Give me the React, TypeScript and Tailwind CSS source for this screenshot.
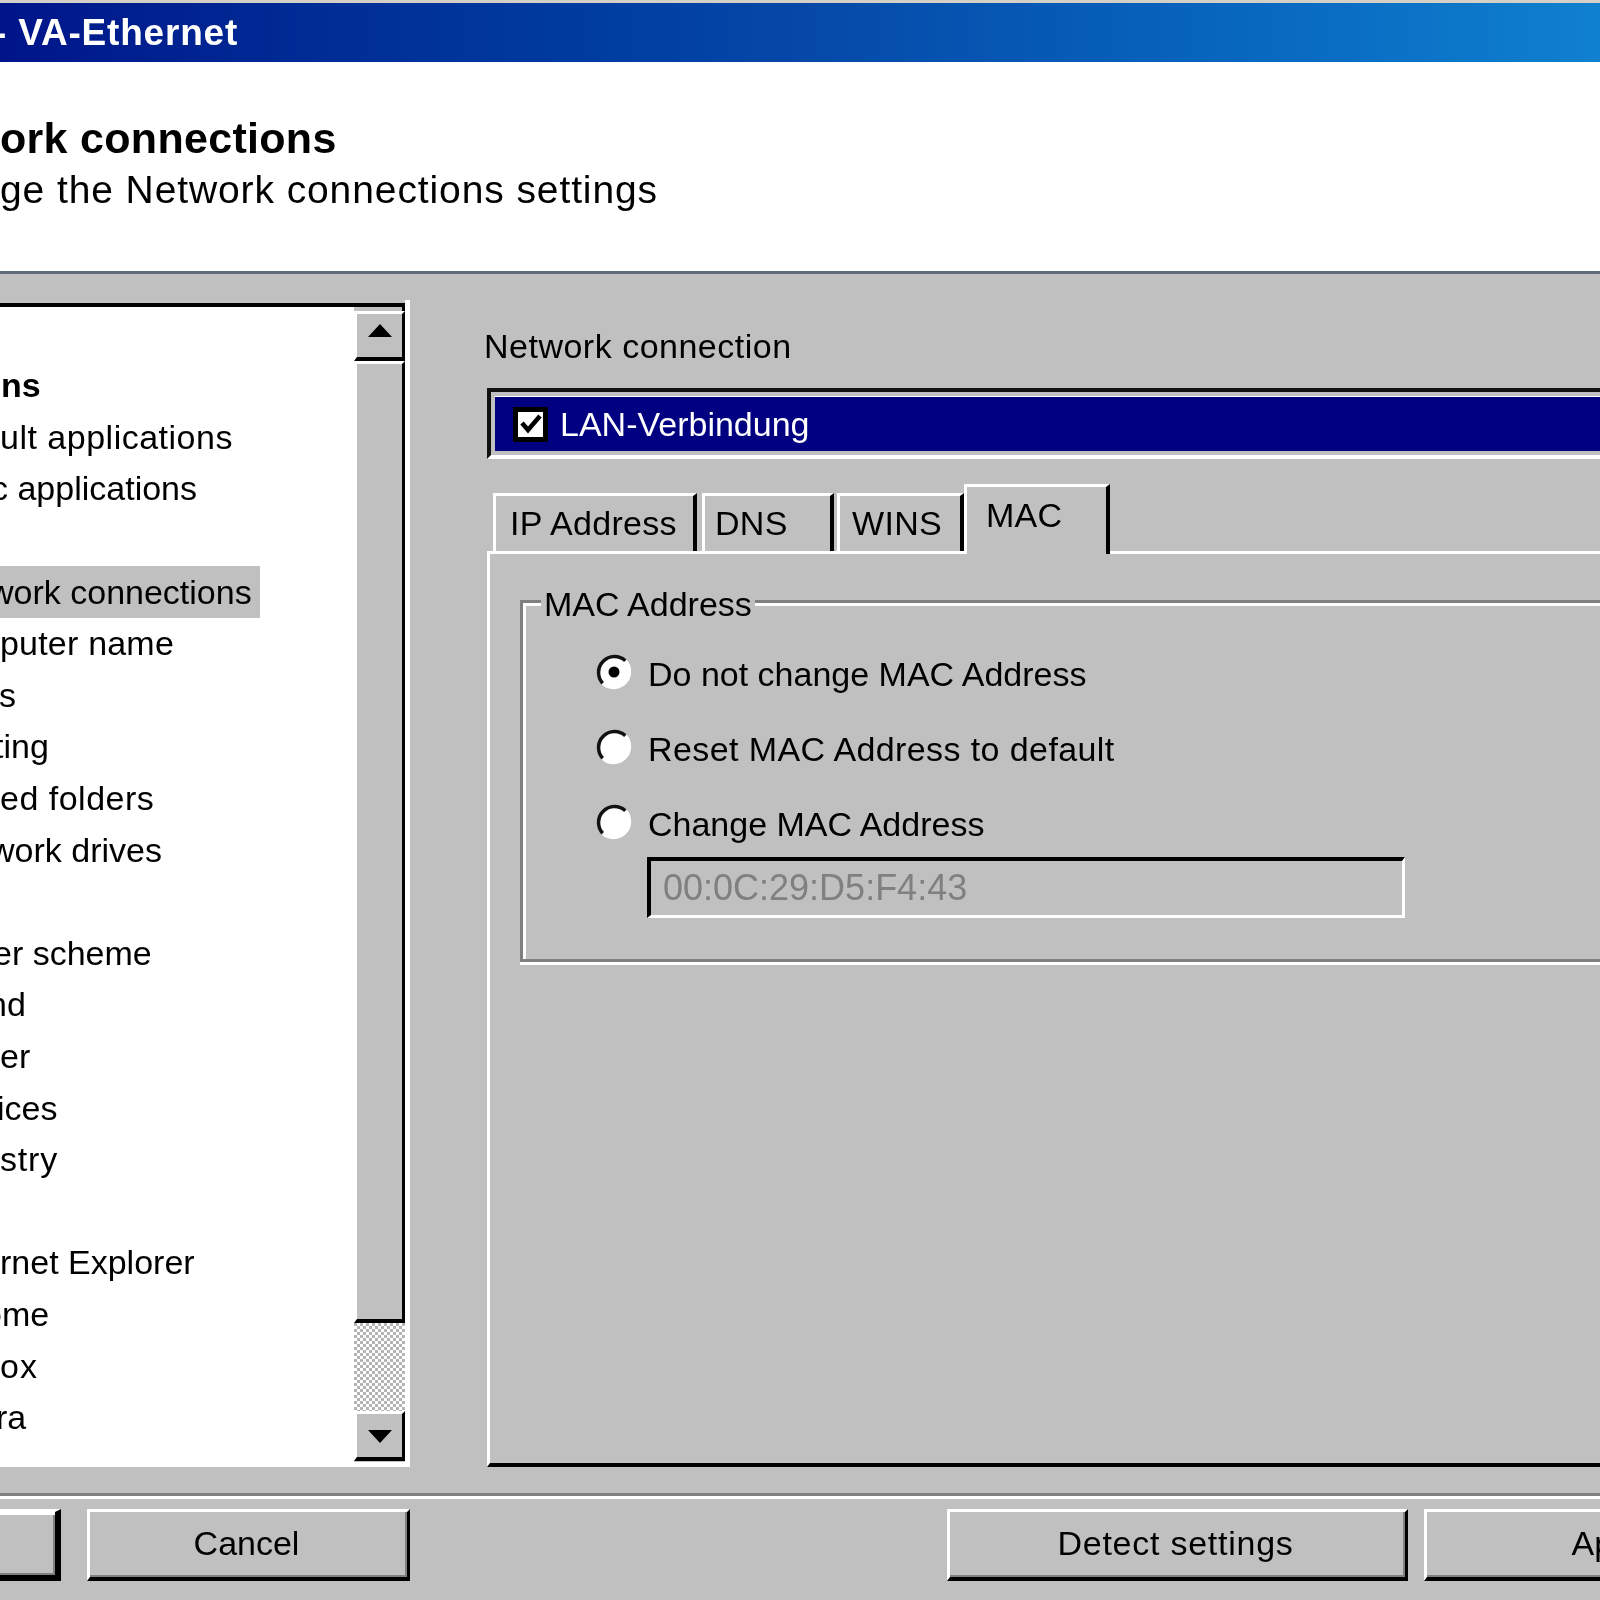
const font = 'font-["Liberation_Sans",Arial,sans-serif]';

// the window is cropped on the left, so these are only the parts that show
const listItems = [
  { label: 'ns', offset: 'ml-[1px]', bold: true },
  { label: 'ult applications', offset: 'tracking-[0.5px]' },
  { label: 'c applications', offset: '-ml-[9px]' },
  { label: '', offset: '' },
  { label: 'work connections', offset: '-ml-[11px]', selected: true },
  { label: 'puter name', offset: 'tracking-[0.2px]' },
  { label: 's', offset: '-ml-[1px]' },
  { label: 'ting', offset: '-ml-[6px]' },
  { label: 'ed folders', offset: 'tracking-[0.5px]' },
  { label: 'work drives', offset: '-ml-[10px]' },
  { label: '', offset: '' },
  { label: 'er scheme', offset: '-ml-[7px]' },
  { label: 'nd', offset: '-ml-[12px]' },
  { label: 'er', offset: '' },
  { label: 'ices', offset: '-ml-[3px]' },
  { label: 'stry', offset: 'tracking-[0.8px]' },
  { label: '', offset: '' },
  { label: 'rnet Explorer', offset: '' },
  { label: 'ome', offset: '-ml-[17px]' },
  { label: 'ox', offset: 'tracking-[1px]' },
  { label: 'ra', offset: '-ml-[4px]' },
];

function Radio({ checked }: { checked?: boolean }) {
  return (
    <svg width="38" height="38" viewBox="0 0 38 38" className="shrink-0 -mt-[5px]">
      <circle cx="19" cy="19" r="15" fill="#fff" />
      <path d="M7.7 30.3A16 16 0 0 0 30.3 7.7" fill="none" stroke="#fff" strokeWidth="3.5" />
      <path d="M30.3 7.7A16 16 0 0 0 7.7 30.3" fill="none" stroke="#111" strokeWidth="3.5" />
      {checked && <circle cx="19" cy="19" r="5.5" fill="#000" />}
    </svg>
  );
}

function Button({ label, className }: { label?: string; className: string }) {
  return (
    <div
      className={`h-[72px] shrink-0 flex items-center justify-center pr-[4px] pb-[3px] border-t-[3px] border-l-[3px] border-r-[3px] border-b-[4px] border-t-white border-l-white border-r-black border-b-black shadow-[inset_-2px_-2px_0_#808080] text-[34px] text-black ${className}`}
    >
      {label}
    </div>
  );
}

function ScrollButton({ down }: { down?: boolean }) {
  return (
    <div
      className={`shrink-0 flex items-center justify-center border-t-[3px] border-l-[3px] border-r-[3px] border-b-[4px] border-t-white border-l-white border-r-black border-b-black ${
        down ? 'h-[50px]' : 'h-[50px] pb-[10px]'
      }`}
    >
      <svg width="24" height="16" viewBox="0 0 24 16">
        <path d={down ? 'M0 2H24L12 15Z' : 'M0 14H24L12 1Z'} fill="#000" />
      </svg>
    </div>
  );
}

function Tab({ label, className, active }: { label: string; className: string; active?: boolean }) {
  return (
    <div
      className={`shrink-0 flex items-center border-t-[3px] border-l-[3px] border-t-white border-l-white border-r-[4px] border-r-black text-[34px] tracking-[0.3px] text-black ${
        active ? 'relative z-10 h-[70px] -mb-[3px] pb-[11px] bg-[#c0c0c0]' : 'h-[58px]'
      } ${className}`}
    >
      {label}
    </div>
  );
}

export default function App() {
  return (
    <div className={`w-[1600px] h-[1600px] overflow-hidden flex flex-col bg-[#c0c0c0] blur-[0.5px] ${font}`}>
      <div className="h-[3px] shrink-0 bg-[#d4d0c8]" />
      <div className="h-[59px] shrink-0 flex items-center bg-gradient-to-r from-[#00148a] via-[#0648a8] via-50% to-[#1080d0] text-white text-[37px] tracking-[0.8px] font-bold whitespace-nowrap">
        <span className="-ml-[6px]">- VA-Ethernet</span>
      </div>

      <div className="h-[212px] shrink-0 bg-white border-b-[3px] border-b-[#5f6b78] flex flex-col pt-[53px] whitespace-nowrap">
        <div className="text-[43px] tracking-[0.3px] leading-[46px] font-bold text-black">ork connections</div>
        <div className="mt-[6px] text-[39px] tracking-[0.9px] leading-[46px] text-black">ge the Network connections settings</div>
      </div>

      <div className="flex-1 flex min-h-0 pt-[26px]">
        <div className="w-[410px] h-[1167px] shrink-0 flex border-r-[5px] border-r-white border-b-[5px] border-b-white pt-[3px]">
          <div className="flex-1 min-w-0 flex border-t-[4px] border-t-black bg-white">
            <div className="flex-1 min-w-0 overflow-hidden pt-[53px] whitespace-nowrap text-[34px] text-black">
              {listItems.map((item, i) => (
                <div
                  key={i}
                  className={`h-[51.6px] flex items-center overflow-hidden ${item.bold ? 'font-bold' : ''} ${
                    item.selected ? 'w-[260px] bg-[#c0c0c0]' : ''
                  }`}
                >
                  <span className={item.offset}>{item.label}</span>
                </div>
              ))}
            </div>
            <div className="w-[51px] shrink-0 flex flex-col bg-[#c0c0c0]">
              <div className="h-[4px] shrink-0 border-r-[3px] border-r-black" />
              <ScrollButton />
              <div className="h-[962px] shrink-0 border-t-[3px] border-l-[3px] border-t-white border-l-white border-r-[3px] border-r-black border-b-[4px] border-b-black" />
              <div className="h-[88px] shrink-0 bg-[repeating-conic-gradient(#fff_0_25%,#b4b4b4_0_50%)] bg-[length:6px_6px]" />
              <ScrollButton down />
            </div>
          </div>
        </div>

        <div className="w-[1113px] ml-[77px] shrink-0 flex flex-col">
          <div className="h-[54px] mt-[19px] mb-[15px] text-[34px] tracking-[0.5px] text-black flex items-center -ml-[3px]">Network connection</div>
          <div className="h-[71px] w-[1300px] shrink-0 border-t-[4px] border-l-[4px] border-t-[#111] border-l-[#111] border-b-[4px] border-b-white p-[4px] flex">
            <div className="flex-1 bg-[#000080] border-t border-t-white flex items-center pl-[18px] gap-[12px] text-white text-[34px]">
              <div className="w-[35px] h-[35px] shrink-0 bg-white border-[5px] border-black flex items-center justify-center">
                <svg width="22" height="20" viewBox="0 0 22 20">
                  <path d="M2 9L8 16L20 2" fill="none" stroke="#000" strokeWidth="4.5" />
                </svg>
              </div>
              LAN-Verbindung
            </div>
          </div>

          <div className="h-[92px] shrink-0 flex items-end pl-[6px]">
            <Tab label="IP Address" className="w-[204px] mr-[5px] pl-[14px]" />
            <Tab label="DNS" className="w-[132px] mr-[3px] pl-[10px]" />
            <Tab label="WINS" className="w-[127px] pl-[12px]" />
            <Tab label="MAC" className="w-[146px] pl-[19px]" active />
          </div>

          <div className="w-[1300px] h-[916px] shrink-0 border-t-[3px] border-t-white border-l-[3px] border-l-white border-b-[4px] border-b-black pl-[30px] pt-[46px]">
            <div className="relative h-[362px] border-[3px] border-[#808080] border-r-0 shadow-[inset_3px_3px_0_#fff,0_3px_0_#fff]">
              <div className="absolute -top-[19px] left-[18px] px-[3px] bg-[#c0c0c0] text-[34px] leading-[40px] text-black">MAC Address</div>
              <div className="flex flex-col pt-[34px] pl-[72px] text-[34px] text-black">
                <div className="h-[75px] flex items-center gap-[15px]"><Radio checked />Do not change MAC Address</div>
                <div className="h-[75px] flex items-center gap-[15px] tracking-[0.4px]"><Radio />Reset MAC Address to default</div>
                <div className="h-[75px] flex items-center gap-[15px]"><Radio />Change MAC Address</div>
                <div className="ml-[52px] w-[758px] h-[61px] -mt-[5px] border-t-[4px] border-l-[4px] border-t-black border-l-black border-b-[3px] border-r-[3px] border-b-white border-r-white flex items-center pl-[12px] text-[#808080] text-[36px]">
                  00:0C:29:D5:F4:43
                </div>
              </div>
            </div>
          </div>
        </div>
      </div>

      <div className="shrink-0 border-t-[3px] border-t-[#808080]" />
      <div className="shrink-0 border-t-[3px] border-t-white" />
      <div className="h-[101px] shrink-0 flex pt-[10px] whitespace-nowrap">
        <Button className="w-[161px] -ml-[100px] border-r-[6px] border-b-[6px] border-t-black shadow-[inset_0_3px_0_#fff,inset_-2px_-2px_0_#808080]" />
        <Button label="Cancel" className="w-[323px] ml-[26px]" />
        <Button label="Detect settings" className="w-[461px] ml-[537px] tracking-[0.75px]" />
        <Button label="Apply" className="w-[384px] ml-[16px]" />
      </div>
    </div>
  );
}
